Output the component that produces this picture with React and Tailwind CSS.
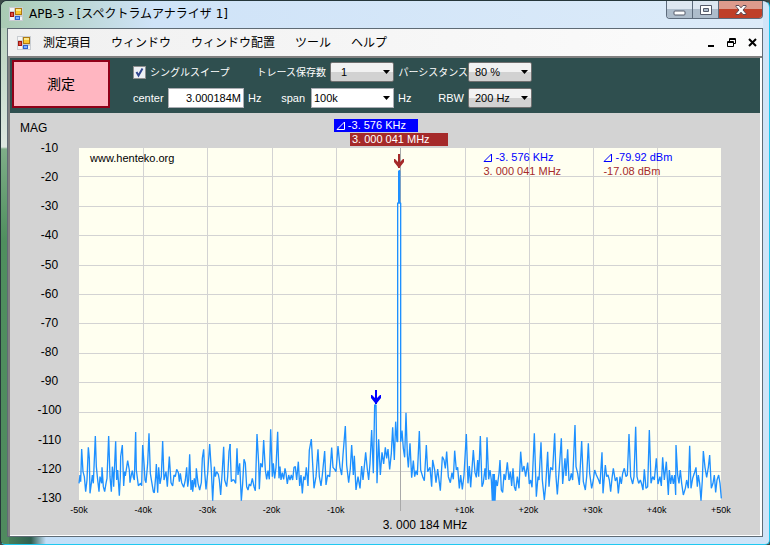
const MENU = ['測定項目', 'ウィンドウ', 'ウィンドウ配置', 'ツール', 'ヘルプ'];

const LEVELS = [-10, -20, -30, -40, -50, -60, -70, -80, -90, -100, -110, -120, -130];
const OFFSETS = ['-50k', '-40k', '-30k', '-20k', '-10k', '', '+10k', '+20k', '+30k', '+40k', '+50k'];

// Plot grid lines, in plot units (642 x 352)
const GRID_X = [64, 128, 193, 257, 386, 450, 514, 578];
const GRID_Y = [28, 58, 87, 117, 146, 175, 205, 234, 264, 293, 323];

// Sweep blocks: x is where the block starts, samples are in thirds of a plot unit
const SWEEP = [
  {
    x: -79,
    points:
      '237,310 240,285 242,305 245,207 249,275 253,290 257,335 261,300 265,202 268,235 270,340 274,310 277,285 280,310 286,168 289,260 292,290 297,335 300,290 305,310 306,262 310,320 314,335 318,310 321,295 326,168 330,290 334,335 337,260 340,290 341,320 347,184 350,300 353,270 358,347 361,290 362,230 367,195 371,318 374,275 376,288 383,242 388,270 390,308 394,285 397,272 400,292 403,300 407,156 409,270 415,317 422,310 425,317 428,195 432,250 435,300 438,308 443,250 447,160 451,280 455,305 460,335 463,338 467,290 469,252 473,338 476,262 480,312 484,290 488,183 492,300 498,275 502,320 508,230 513,308 518,318 522,285 526,290 530,268 535,278 538,305 541,280 545,308 551,322 556,300 560,262 563,320 566,300 569,223 573,330 577,300 578,335 583,295 587,322 589,265 594,310 599,330 604,308 607,235 611,208 614,275 618,328 623,280 629,192 634,270 638,362 643,260 646,290 650,275 655,283 658,300 662,345 667,270 671,200 674,300 680,320 683,290 687,215 691,192',
  },
  {
    x: 151,
    points:
      '0,192 4,305 8,300 12,300 17,310 21,205 24,285 29,250 34,362 38,310 42,238 46,250 50,320 54,330 58,312 62,318 67,295 72,320 76,332 81,162 86,250 88,328 92,250 97,262 101,180 106,270 110,298 114,272 118,298 122,148 127,290 130,250 134,295 138,262 143,155 147,295 150,260 153,300 157,278 161,298 165,265 168,280 172,312 176,285 180,300 184,285 188,300 192,262 196,260 200,300 205,245 209,318 213,285 217,340 221,290 225,300 229,262 234,318 238,210 244,177 249,270 252,325 258,290 264,208 268,290 273,318 277,285 284,213 288,315 293,285 299,290 305,203 309,262 314,268 318,275 324,198 330,262 335,285 339,225 346,138 350,255 356,308 361,265 365,195 370,285 373,227 378,330 384,290 390,325 395,258 399,300 407,217 412,268 416,300 420,250 425,150 430,280 434,75 438,75 441,310 446,178 451,285 456,217 461,252 466,202 470,235 474,207 479,268 484,220 488,142 493,240 497,125 501,185 503,185 503,-531 507,-531 507,-628 509,-628 509,-531 512,-531 512,185',
  },
  {
    x: 311,
    points:
      '32,185 36,152 40,205 44,232 48,98 52,225 55,262 60,190 65,293 70,242 74,290 78,272 82,285 88,153 92,270 98,290 103,302 109,195 113,275 120,262 125,320 128,240 134,270 138,308 143,267 151,332 157,230 162,240 166,265 170,215 175,290 181,308 186,278 190,298 194,212 199,270 203,262 208,325 212,285 217,328 222,285 229,162 234,310 238,258 242,322 250,210 255,278 259,292 263,240 266,290 271,168 276,320 280,308 285,265 288,300 291,172 296,298 300,270 304,300 307,362 309,282 311,362 313,282 315,362 318,300 322,318 327,280 330,240 334,330 338,337 342,282 346,300 352,247 357,300 361,275 365,318 369,265 373,320 377,332 382,290 387,325 392,215 397,275 402,258 407,290 413,248 418,312 422,300 426,322 433,160 439,350 444,290 447,300 453,187 457,300 463,360 467,318 473,215 477,320 482,262 488,270 494,160 498,290 502,343 508,262 514,175 518,312 525,235 528,288 533,208 537,302 540,300',
  },
  {
    x: 491,
    points:
      '0,300 4,280 8,300 15,135 18,260 23,280 28,315 35,183 40,305 46,330 50,290 55,190 59,280 65,325 70,300 74,270 79,285 86,300 90,312 96,217 99,340 106,255 110,290 114,285 118,300 122,335 126,295 130,265 136,303 141,292 145,340 150,290 154,312 158,280 163,265 168,290 172,285 177,162 182,290 188,312 192,290 197,140 201,290 206,310 211,300 215,312 219,330 223,268 228,325 233,320 238,150 243,310 248,290 253,300 259,235 264,312 270,290 274,318 278,232 283,300 289,245 295,345 298,270 302,312 306,285 310,312 314,285 317,345 318,195 323,285 327,310 331,270 335,310 340,345 346,325 350,300 355,325 359,197 363,325 368,295 373,280 378,262 382,320 385,285 389,310 393,362 397,300 400,213 405,262 410,292 415,262 419,225 424,325 429,310 433,285 437,337 441,300 446,285 450,310 454,355',
  },
];

function FormIcon({ className }) {
  return (
    <svg className={className} width="14" height="14" viewBox="0 0 14 14" aria-hidden="true">
      <rect x="0" y="0" width="14" height="14" fill="#c9cdd2" />
      <path d="M1 1h4v3H1zM1 10h4v3H1zM11 10h2v3h-2z" fill="#f5f5f5" />
      <rect x="6.5" y="1.5" width="6" height="6" fill="#f8c832" stroke="#b07a10" />
      <rect x="7" y="2" width="5" height="2" fill="#fde98a" />
      <rect x="1.5" y="5.5" width="3" height="4" fill="#e05040" stroke="#a01810" />
      <rect x="6.5" y="9.5" width="4" height="3" fill="#7fb2ff" stroke="#2b62d0" />
    </svg>
  );
}

function DeltaIcon() {
  return (
    <svg className="mr-0.5 shrink-0" width="10" height="9" viewBox="0 0 10 9" fill="none" stroke="currentColor" aria-hidden="true">
      <path d="M1 8.5H8.5V1Z" />
    </svg>
  );
}

function DropDown({ id, value, className, selectClassName = 'pl-1.5' }) {
  return (
    <div className={`relative h-5 ${className}`}>
      <select
        id={id}
        defaultValue={value}
        className={`block h-full w-full appearance-none rounded-[2px] border border-[#707070] bg-linear-to-b from-[#f2f2f2] from-50% to-[#d2d2d2] to-50% text-[11px] text-black outline-none ${selectClassName}`}
      >
        <option>{value}</option>
      </select>
      <Arrow />
    </div>
  );
}

function Arrow() {
  return (
    <svg className="pointer-events-none absolute top-2 right-1" width="7" height="4" viewBox="0 0 7 4" aria-hidden="true">
      <path d="M0 0H7L3.5 4Z" fill="#000" />
    </svg>
  );
}

function TitleBar() {
  const button = 'flex h-full items-center justify-center border-r border-[#5d6b7c]';
  return (
    <header className="-ml-1.5 flex h-[27px] items-start justify-between rounded-tl-[6px] bg-linear-to-r from-[#a9cbb3] via-[#cfe3f8] via-20% to-[#dcebf9] pl-1.5">
      <div className="flex h-[26px] items-center gap-1.5 pl-0.5">
        <FormIcon />
        <h1 className="font-['DejaVu_Sans','Noto_Sans_CJK_JP',sans-serif] text-[12px] text-black">APB-3 - [スペクトラムアナライザ 1]</h1>
      </div>
      <div className="flex h-[18px] overflow-hidden rounded-b-[4px] border border-t-0 border-[#5d6b7c]">
        <button aria-label="最小化" className={`${button} w-[26px] bg-linear-to-b from-[#dde7f1] from-50% to-[#adbccb] to-50%`}>
          <svg width="13" height="12" viewBox="0 0 13 12">
            <rect x="1" y="7" width="11" height="4" rx="1" fill="#fff" stroke="#555b6b" />
          </svg>
        </button>
        <button aria-label="最大化" className={`${button} w-[26px] bg-linear-to-b from-[#dde7f1] from-50% to-[#adbccb] to-50%`}>
          <svg width="12" height="10" viewBox="0 0 12 10">
            <path d="M0.5 0.5H11.5V9.5H0.5ZM3.5 3.5V6.5H8.5V3.5Z" fill="#fff" stroke="#555b6b" fillRule="evenodd" />
          </svg>
        </button>
        <button aria-label="閉じる" className="flex h-full w-[43px] items-center justify-center bg-linear-to-b from-[#dd9a8c] from-50% to-[#bf3f28] to-50%">
          <svg width="12" height="10" viewBox="0 0 12 10">
            <path d="M1 0.5H4L6 2.8 8 0.5H11V1.5L8 5 11 8.5V9.5H8L6 7.2 4 9.5H1V8.5L4 5 1 1.5Z" fill="#fff" stroke="#5a4a55" />
          </svg>
        </button>
      </div>
    </header>
  );
}

function MenuBar() {
  return (
    <div className="flex h-[27px] items-center bg-linear-to-r from-[#f0f0f0] to-[#fcfcfc] pr-[5px] pl-[9px]">
      <FormIcon className="mr-3" />
      <nav className="flex gap-5">
        {MENU.map((item) => (
          <button key={item} className="text-[12px] whitespace-nowrap text-black">
            {item}
          </button>
        ))}
      </nav>
      <div className="ml-auto flex items-center gap-3">
        <button aria-label="子ウィンドウを最小化">
          <svg width="9" height="9" viewBox="0 0 9 9">
            <path d="M2 7h6v2H2z" />
          </svg>
        </button>
        <button aria-label="子ウィンドウを元に戻す">
          <svg width="9" height="9" viewBox="0 0 9 9" fill="none" stroke="#000">
            <path d="M2.5 3V0.5H8.5V5.5H7M2 1.5H9M0.5 3.5H6.5V8.5H0.5ZM0 4.5H7" />
          </svg>
        </button>
        <button aria-label="子ウィンドウを閉じる">
          <svg width="9" height="9" viewBox="0 0 9 9" stroke="#000" strokeWidth="2">
            <path d="M1 1L8 8M8 1L1 8" />
          </svg>
        </button>
      </div>
    </div>
  );
}

function Toolbar() {
  return (
    <div className="flex items-start bg-[#2f4f4f] px-0.5 pt-0.5 pb-[5px] text-[11px] whitespace-nowrap text-white">
      <button className="h-12 w-[98px] border-2 border-[#900018] bg-[#ffb6c1] text-[14px] text-black">測定</button>
      <div className="ml-[23px] grid grid-cols-[111px_150px_138px] items-center gap-y-1.5 pt-0.5">
        <label className="flex items-center gap-1 text-[10px]">
          <span className="relative block size-[13px]">
            <input type="checkbox" defaultChecked className="block size-full appearance-none border border-[#8e8f8f] bg-[#eef1f5]" />
            <svg className="pointer-events-none absolute inset-0" width="13" height="13" viewBox="0 0 13 13" fill="none" stroke="#31478f" strokeWidth="2">
              <path d="M3.5 6L5.5 9.5 9.5 2.5" />
            </svg>
          </span>
          シングルスイープ
        </label>
        <div className="flex items-center justify-end gap-1">
          <label htmlFor="traces" className="text-[10px]">トレース保存数</label>
          <DropDown id="traces" value="1" className="w-16" selectClassName="pl-2.5" />
        </div>
        <div className="flex items-center justify-end">
          <label htmlFor="persistence" className="text-[10px]">パーシスタンス</label>
          <DropDown id="persistence" value="80 %" className="w-16" />
        </div>

        <div className="flex items-center justify-between">
          <label htmlFor="center">center</label>
          <input id="center" defaultValue="3.000184M" className="h-5 w-[76px] border border-[#abadb3] bg-white px-0.5 text-right text-black outline-none" />
        </div>
        <div className="flex items-center justify-end">
          <span className="mr-auto ml-1">Hz</span>
          <label htmlFor="span" className="mr-1.5">span</label>
          <div className="relative h-5 w-[83px]">
            <select id="span" defaultValue="100k" className="block h-full w-full appearance-none border border-[#abadb3] bg-white pl-0.5 text-black outline-none">
              <option>100k</option>
            </select>
            <Arrow />
          </div>
        </div>
        <div className="flex items-center justify-end">
          <span className="mr-auto ml-1">Hz</span>
          <label htmlFor="rbw" className="mr-1">RBW</label>
          <DropDown id="rbw" value="200 Hz" className="w-16" />
        </div>
      </div>
    </div>
  );
}

function Plot() {
  return (
    <svg className="absolute inset-0 block h-full w-full overflow-visible" viewBox="0 0 642 352" preserveAspectRatio="none" aria-label="スペクトラム">
      <rect width="642" height="352" fill="#fffff0" />
      <g fill="#d3d3d3">
        {GRID_X.map((x) => (
          <rect key={x} x={x} y="0" width="1" height="352" />
        ))}
        {GRID_Y.map((y) => (
          <rect key={y} x="0" y={y} width="642" height="1" />
        ))}
      </g>
      <rect x="321" y="0" width="1" height="363" fill="#a9a9a9" />
      <g fill="none" stroke="#1e90ff">
        {SWEEP.map((block) => (
          <g key={block.x} transform={`translate(${block.x} 232) scale(0.33333)`}>
            <polyline points={block.points} strokeWidth="4" strokeLinejoin="bevel" />
          </g>
        ))}
        <path d="M320 23V55" strokeWidth="2" />
      </g>
      {/* Markers */}
      <path d="M319 6H321V14L324 11H325V14L321 19V20H319V19L315 14V11H316L319 14Z" fill="#a52a2a" />
      <path d="M296 242H298V250L301 247H302V250L298 255V256H296V255L292 250V247H293L296 250Z" fill="#0000ff" />
    </svg>
  );
}

function SpectrumChart() {
  return (
    <main className="grid flex-1 grid-cols-[69px_1fr_39px] grid-rows-[35px_1fr_35px] bg-[#d3d3d3] text-[12px] text-black">
      <div className="pt-1.5 pl-2.5">MAG</div>
      <div className="relative text-[11px] leading-[13px] whitespace-nowrap text-white">
        <div className="absolute top-1.5 left-[39.7%] flex h-[13px] w-[84px] items-center bg-[#0000ff] pl-0.5">
          <DeltaIcon />
          -3. 576 KHz
        </div>
        <div className="absolute top-5 left-[42.2%] h-[13px] w-[98px] bg-[#a52a2a] pl-0.5">3. 000 041 MHz</div>
      </div>
      <div />

      <div className="flex flex-col justify-between pb-0.5 pl-2.5">
        {LEVELS.map((level) => (
          <div key={level} className="flex h-0 items-center justify-center">
            {level}
          </div>
        ))}
      </div>
      <div className="relative">
        <Plot />
        <div className="relative flex pt-[3px] pl-[11px] text-[11px] leading-[14px] whitespace-nowrap">
          <a href="#henteko">www.henteko.org</a>
        </div>
        <div className="absolute top-0.5 left-[63%] grid grid-cols-[120px_auto] text-[11px] leading-[14px] whitespace-nowrap">
          <span className="flex items-center text-[#0000ff]"><DeltaIcon />-3. 576 KHz</span>
          <span className="flex items-center text-[#0000ff]"><DeltaIcon />-79.92 dBm</span>
          <span className="text-[#a52a2a]">3. 000 041 MHz</span>
          <span className="text-[#a52a2a]">-17.08 dBm</span>
        </div>
      </div>
      <div />

      <div />
      <div>
        <div className="flex justify-between pt-1 text-[9px] leading-[13px]">
          {OFFSETS.map((offset) => (
            <div key={offset} className="flex w-0 justify-center">
              {offset}
            </div>
          ))}
        </div>
        <p className="pl-[50px] text-center leading-[16px]">3. 000 184 MHz</p>
      </div>
      <div />
    </main>
  );
}

export default function App() {
  return (
    <div className="bg-[#3c4a48] font-['Liberation_Sans','Noto_Sans_CJK_JP',sans-serif]">
      <div className="flex min-h-screen flex-col rounded-t-[7px] rounded-b-[5px] border border-[#25363a] border-r-[#20c8f0] border-b-[#20c8f0] px-1.5 pb-[7px] [background:linear-gradient(to_bottom,#b0cdb6,#dde8e0_146px,#7fae88_148px,#4f8f5e_240px,#4f8a5e)_left/8px_100%_no-repeat,linear-gradient(to_right,#4f8a5e,#2f5f50_30px,#c3dff8_45px,#cfe4f8)]">
        <TitleBar />
        <div className="flex flex-1 flex-col border border-[#5f6b75] bg-[#f0f0f0]">
          <MenuBar />
          <div className="flex flex-1 flex-col border-t-2 border-l-2 border-[#808080]">
            <div className="flex flex-1 flex-col border-r-2 border-b border-white">
              <Toolbar />
              <SpectrumChart />
            </div>
          </div>
        </div>
      </div>
    </div>
  );
}
